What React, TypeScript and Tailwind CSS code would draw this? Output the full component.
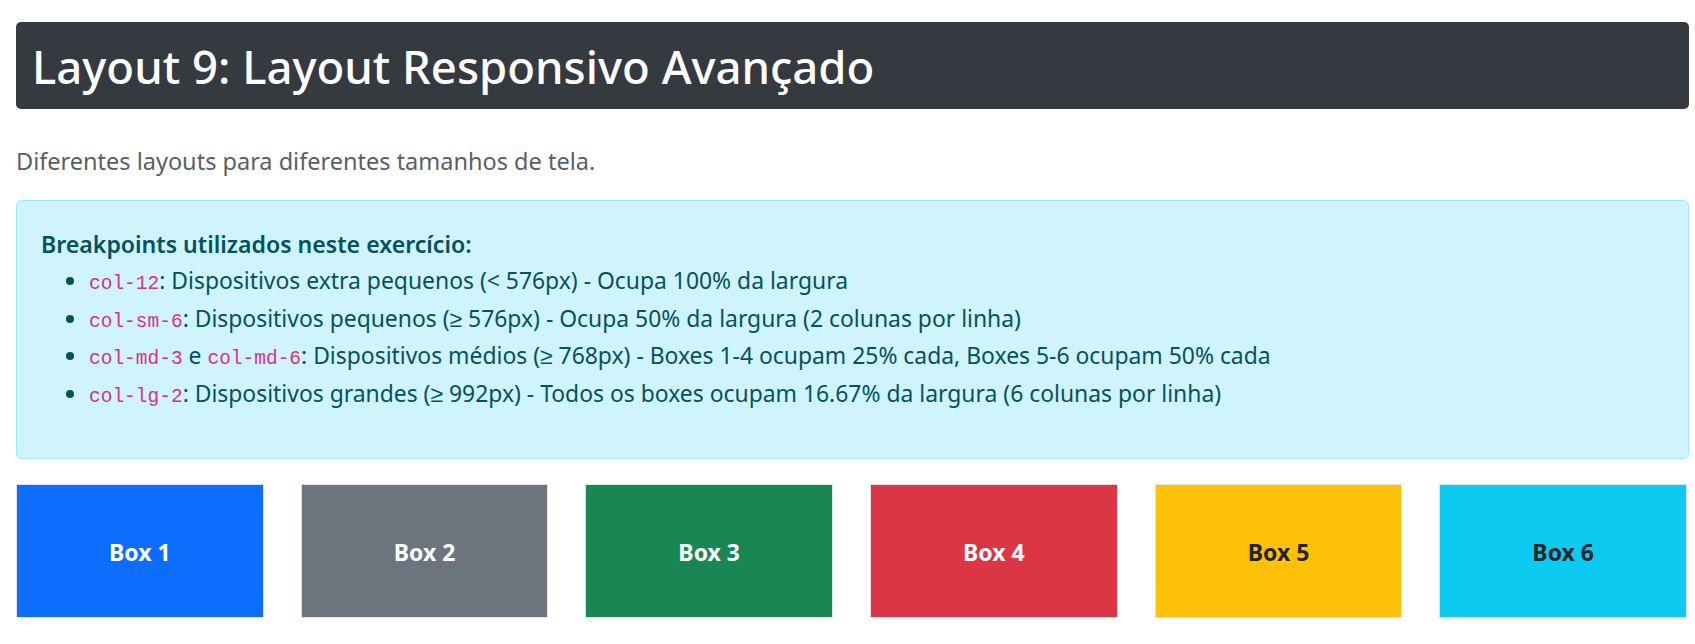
const boxes = [
  { label: "Box 1", bg: "bg-[#0d6efd]", text: "text-white" },
  { label: "Box 2", bg: "bg-[#6c757d]", text: "text-white" },
  { label: "Box 3", bg: "bg-[#198754]", text: "text-white" },
  { label: "Box 4", bg: "bg-[#dc3545]", text: "text-white" },
  { label: "Box 5", bg: "bg-[#ffc107]", text: "text-[#212529]" },
  { label: "Box 6", bg: "bg-[#0dcaf0]", text: "text-[#212529]" },
];

const Code = ({ children }: { children: string }) => (
  <code className="font-['Liberation_Mono',monospace] text-[19.5px] leading-none text-[#d63384]">
    {children}
  </code>
);

export default function App() {
  return (
    <div className="min-h-screen bg-white pl-4 pr-[6px] pt-[22px] font-['Noto_Sans',sans-serif] text-[#212529]">
      {/* Header */}
      <div className="flex h-[87px] items-center rounded-[5px] bg-[#343a40] px-4">
        <h1 className="mt-[2px] text-[45.5px] font-medium leading-tight text-white">
          Layout 9: Layout Responsivo Avançado
        </h1>
      </div>

      <p className="mt-[34px] text-[23.5px] leading-[37px] text-[#595f66]">
        Diferentes layouts para diferentes tamanhos de tela.
      </p>

      {/* Breakpoints info */}
      <div className="mt-[20px] h-[259px] rounded-[6px] border border-[#9eeaf9] bg-[#cff4fc] px-6 pt-[28px] text-[#055160]">
        <h5 className="text-[23.1px] font-semibold leading-[30px]">
          Breakpoints utilizados neste exercício:
        </h5>
        <ul className="mt-[3px] list-disc pl-[48px] text-[22.9px] leading-[37.5px]">
          <li>
            <Code>col-12</Code>: Dispositivos extra pequenos (&lt; 576px) - Ocupa 100% da largura
          </li>
          <li>
            <Code>col-sm-6</Code>: Dispositivos pequenos (≥ 576px) - Ocupa 50% da largura (2 colunas por linha)
          </li>
          <li>
            <Code>col-md-3</Code> e <Code>col-md-6</Code>: Dispositivos médios (≥ 768px) - Boxes 1-4 ocupam 25% cada, Boxes 5-6 ocupam 50% cada
          </li>
          <li>
            <Code>col-lg-2</Code>: Dispositivos grandes (≥ 992px) - Todos os boxes ocupam 16.67% da largura (6 colunas por linha)
          </li>
        </ul>
      </div>

      {/* Boxes */}
      <div className="mt-[25px] grid grid-cols-6 gap-[37px] pr-[2px]">
        {boxes.map((b) => (
          <div
            key={b.label}
            className={`flex h-[134px] items-center justify-center border border-[#dee2e6] ${b.bg} ${b.text}`}
          >
            <span className="mt-[3px] text-[23px] font-bold">{b.label}</span>
          </div>
        ))}
      </div>
    </div>
  );
}
